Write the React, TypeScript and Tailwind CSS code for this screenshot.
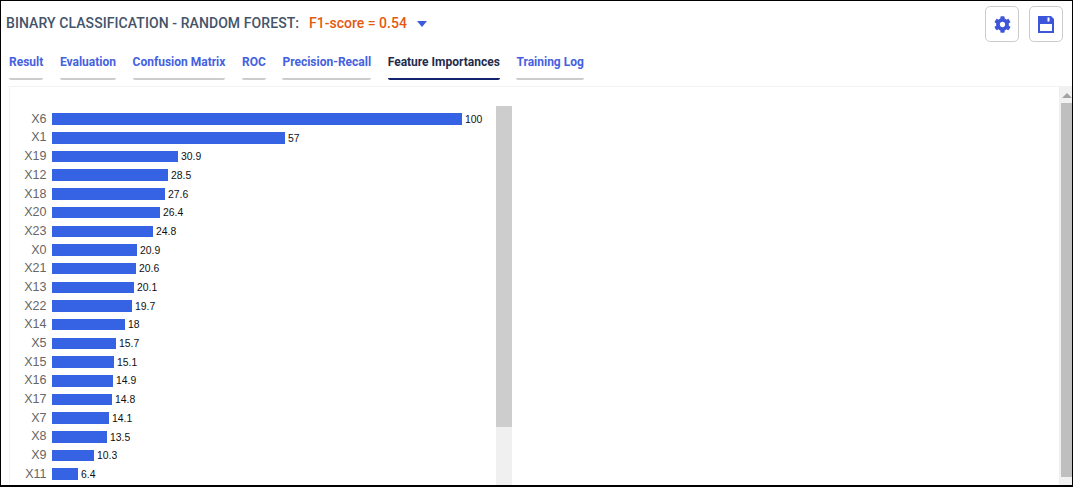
import { FaCog } from "react-icons/fa"

const tabs = ["Result", "Evaluation", "Confusion Matrix", "ROC", "Precision-Recall", "Feature Importances", "Training Log"]

const features: [string, number][] = [
  ["X6", 100], ["X1", 57], ["X19", 30.9], ["X12", 28.5], ["X18", 27.6],
  ["X20", 26.4], ["X23", 24.8], ["X0", 20.9], ["X21", 20.6], ["X13", 20.1],
  ["X22", 19.7], ["X14", 18], ["X5", 15.7], ["X15", 15.1], ["X16", 14.9],
  ["X17", 14.8], ["X7", 14.1], ["X8", 13.5], ["X9", 10.3], ["X11", 6.4],
]

function Bar({ name, value }: { name: string; value: number }) {
  return (
    <div className="flex h-[18.7px] items-center">
      <span className="w-[37px] pr-[0.5px] text-right text-[12.5px] text-[#666]">{name}</span>
      <div className="ml-[5px] h-[11.5px] bg-[#3563e3]" style={{ width: Math.floor(value * 4.1 + 0.1) }} />
      <span className="ml-[3px] mt-[1px] text-[10.4px] text-[#111]">{value}</span>
    </div>
  )
}

function SaveIcon() {
  return (
    <svg width="16" height="17" viewBox="0 0 16 17">
      <path fill="#3d55d8" d="M0 0h13l3 3v14H0z" />
      <path fill="#fff" d="M2 8h12v7H2z" />
      <path fill="#fff" d="M9.5 1.5h2v4h-2z" />
    </svg>
  )
}

export default function App() {
  return (
    <div className="flex h-[487px] w-[1073px] flex-col overflow-hidden border border-b-2 border-black bg-white font-['Roboto',sans-serif]">
      <div className="flex h-[47px] shrink-0 items-start justify-between pl-[5px] pr-[9px] pt-[5px]">
        <div className="flex h-[36px] items-center pb-[1px] text-[14px] font-medium">
          <span className="tracking-[0.08px] text-[#44546a]">BINARY CLASSIFICATION - RANDOM FOREST:</span>
          <span className="ml-[10px] text-[#e35a0f]">F1-score = 0.54</span>
          <span className="ml-[10px] mt-[1px] h-0 w-0 border-x-[5.5px] border-t-[6px] border-x-transparent border-t-[#3d5bd9]" />
        </div>
        <div className="flex gap-[10px]">
          <button type="button" className="flex h-[36px] w-[34px] items-center justify-center rounded-[5px] border border-[#ccc] text-[#3d55d8]">
            <FaCog size={17} />
          </button>
          <button type="button" className="flex h-[36px] w-[34px] items-center justify-center rounded-[5px] border border-[#ccc]">
            <SaveIcon />
          </button>
        </div>
      </div>
      <div className="flex h-[33px] shrink-0 gap-[16.6px] pl-[8px]">
        {tabs.map((tab) => {
          const active = tab === "Feature Importances"
          return (
            <div
              key={tab}
              className={
                active
                  ? "h-[32px] rounded-b-[2px] border-b-2 border-[#14236e] pt-[5px] text-[12px] font-bold text-[#1f2a4d]"
                  : "h-[32px] rounded-b-[2px] border-b-2 border-[#ccc] pt-[5px] text-[12px] font-bold text-[#4461e0]"
              }
            >
              {tab}
            </div>
          )
        })}
      </div>
      <div className="flex min-h-0 flex-1 pt-[5px]">
        <div className="ml-[8px] flex min-w-0 flex-1 overflow-hidden border-l border-t border-[#f2f2f2] pt-[19px] font-['Liberation_Sans',sans-serif]">
          <div className="w-[486px] shrink-0 pt-[3.8px]">
            {features.map(([name, value]) => (
              <Bar key={name} name={name} value={value} />
            ))}
          </div>
          <div className="flex w-[16px] shrink-0 flex-col bg-[#f0f0f0]">
            <div className="h-[321px] bg-[#cdcdcd]" />
          </div>
        </div>
        <div className="flex w-[13px] shrink-0 flex-col border-l border-[#eee] bg-[#f1f1f1] pl-[1px]">
          <div className="flex h-[17px] shrink-0 items-center justify-center pt-[1px]">
            <span className="h-0 w-0 border-x-[5px] border-b-[5px] border-x-transparent border-b-[#a3a3a3]" />
          </div>
          <div className="h-[374px] w-full bg-[#bfbfbf]" />
        </div>
      </div>
    </div>
  )
}
